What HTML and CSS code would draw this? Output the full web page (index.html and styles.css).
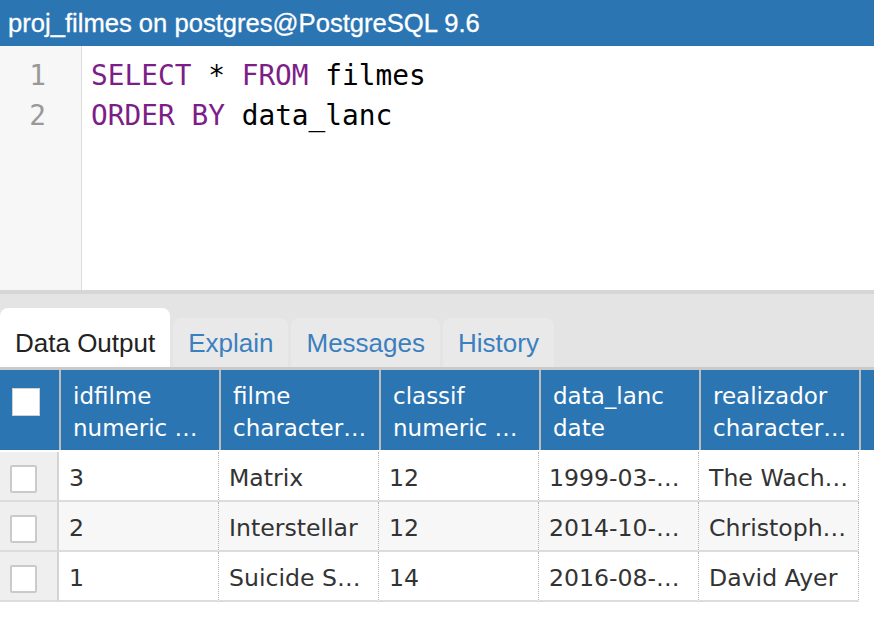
FILE: index.html
```html
<!DOCTYPE html>
<html>
<head>
<meta charset="utf-8">
<link rel="stylesheet" href="styles.css">
</head>
<body>
<div class="title">proj_filmes on postgres@PostgreSQL 9.6</div>
<div class="editor">
  <div class="gutter"><div class="ln">1</div><div class="ln">2</div></div>
  <div class="code">
    <div class="line"><span class="kw">SELECT</span> * <span class="kw">FROM</span> filmes</div>
    <div class="line"><span class="kw">ORDER</span> <span class="kw">BY</span> data_lanc</div>
  </div>
</div>
<div class="divider"></div>
<div class="tabs">
  <div class="tab active">Data Output</div>
  <div class="tab">Explain</div>
  <div class="tab">Messages</div>
  <div class="tab">History</div>
</div>
<div class="grid">
  <div class="ghead">
    <div class="hc hcheck"><span class="hbox"></span></div>
    <div class="hc">idfilme<br>numeric …</div>
    <div class="hc">filme<br>character…</div>
    <div class="hc">classif<br>numeric …</div>
    <div class="hc">data_lanc<br>date</div>
    <div class="hc">realizador<br>character…</div>
    <div class="hc"></div>
  </div>
  <div class="gbody">
    <div class="row">
      <div class="rc rcheck"><span class="box"></span></div>
      <div class="rc">3</div>
      <div class="rc">Matrix</div>
      <div class="rc">12</div>
      <div class="rc">1999-03-…</div>
      <div class="rc">The Wach…</div>
    </div>
    <div class="row alt">
      <div class="rc rcheck"><span class="box"></span></div>
      <div class="rc">2</div>
      <div class="rc">Interstellar</div>
      <div class="rc">12</div>
      <div class="rc">2014-10-…</div>
      <div class="rc">Christoph…</div>
    </div>
    <div class="row">
      <div class="rc rcheck"><span class="box"></span></div>
      <div class="rc">1</div>
      <div class="rc">Suicide S…</div>
      <div class="rc">14</div>
      <div class="rc">2016-08-…</div>
      <div class="rc">David Ayer</div>
    </div>
  </div>
</div>
</body>
</html>
```

FILE: styles.css
```css
html, body {
  margin: 0;
  padding: 0;
}
body {
  width: 874px;
  height: 618px;
  overflow: hidden;
  background: #ffffff;
}
.title {
  height: 46px;
  line-height: 46px;
  background: #2c75b3;
  color: #ffffff;
  font-family: "Liberation Sans", Arial, sans-serif;
  font-size: 25.6px;
  padding-left: 8px;
  white-space: nowrap;
  -webkit-text-stroke: 0.3px #ffffff;
}
.editor {
  height: 244px;
  display: flex;
  background: #ffffff;
}
.gutter {
  width: 82px;
  flex: none;
  background: #f7f7f7;
  border-right: 1px solid #dddddd;
  padding-top: 10px;
  box-sizing: border-box;
  font-family: "DejaVu Sans Mono", monospace;
  font-size: 27.8px;
  line-height: 40px;
  color: #999999;
  text-align: right;
  padding-right: 35px;
}
.code {
  padding-top: 10px;
  padding-left: 9px;
  font-family: "DejaVu Sans Mono", monospace;
  font-size: 27.8px;
  line-height: 40px;
  color: #000000;
}
.line {
  white-space: pre;
}
.kw {
  color: #7d1d88;
}
.divider {
  height: 4px;
  background: #d6d6d6;
}
.tabs {
  height: 73px;
  background: #e4e4e4;
  display: flex;
  align-items: flex-end;
  gap: 3px;
}
.tab {
  height: 49px;
  box-sizing: border-box;
  padding: 0 15px 9px;
  display: flex;
  align-items: flex-end;
  background: #e9e9e9;
  border-radius: 8px 8px 0 0;
  font-family: "Liberation Sans", Arial, sans-serif;
  font-size: 26px;
  line-height: 30px;
  color: #3b7fbf;
}
.tab.active {
  height: 59px;
  background: #ffffff;
  color: #222222;
}
.grid {
  font-family: "DejaVu Sans", Verdana, sans-serif;
}
.ghead {
  display: grid;
  grid-template-columns: 59px repeat(5, 160px) 1fr;
  height: 80px;
  background: #2c75b3;
  border-top: 3px solid #cacaca;
}
.hc {
  border-left: 2px solid #bdbdbd;
  padding: 10px 0 0 12px;
  font-size: 23px;
  line-height: 32px;
  color: #ffffff;
  white-space: nowrap;
  overflow: hidden;
}
.hcheck {
  border-left: none;
  padding: 18px 0 0 12px;
}
.hbox {
  display: block;
  width: 28px;
  height: 28px;
  box-sizing: border-box;
  background: #ffffff;
  border: 1px solid #d0d0d0;
}
.gbody {
  padding-top: 2px;
}
.row {
  display: grid;
  grid-template-columns: 59px repeat(5, 160px);
  height: 50px;
}
.rc {
  border-right: 1px dotted #b4b4b4;
  border-bottom: 2px solid #dcdcdc;
  padding: 4px 0 0 10px;
  font-size: 23.6px;
  line-height: 44px;
  color: #333333;
  white-space: nowrap;
  overflow: hidden;
}
.row.alt .rc {
  background: #f7f7f7;
}
.rc.rcheck, .row.alt .rc.rcheck {
  background: #efefef;
  border-right: 2px solid #d4d4d4;
  padding: 13px 0 0 10px;
}
.box {
  display: block;
  width: 27px;
  height: 28px;
  box-sizing: border-box;
  background: #ffffff;
  border: 2px solid #cacaca;
  border-radius: 2px;
}
```
